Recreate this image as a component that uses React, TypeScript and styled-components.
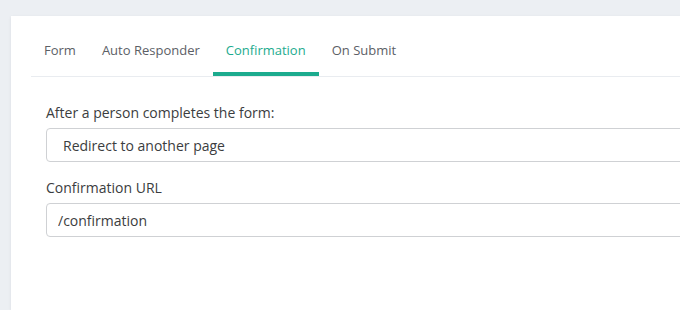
import styled, { createGlobalStyle } from 'styled-components';

const GlobalStyle = createGlobalStyle`
    html, body {
        margin: 0;
        padding: 0;
        background: #eceff3;
        overflow: hidden;
        font-family: "Open Sans", "Liberation Sans", sans-serif;
    }
`

const tabs = ['Form', 'Auto Responder', 'Confirmation', 'On Submit'];

interface TabProps {
    active?: boolean;
}

const App = () => {
    return (
        <Page>
            <GlobalStyle/>
            <Card>
                <TabNav>
                    {tabs.map(tab => (
                        <Tab key={tab} active={tab === 'Confirmation'}>{tab}</Tab>
                    ))}
                </TabNav>
                <Body>
                    <Field>
                        <Label>After a person completes the form:</Label>
                        <Select defaultValue="redirect">
                            <option value="message">Show a message</option>
                            <option value="redirect">Redirect to another page</option>
                        </Select>
                    </Field>
                    <Field>
                        <Label>Confirmation URL</Label>
                        <Input defaultValue="/confirmation"/>
                    </Field>
                </Body>
            </Card>
        </Page>
    )
}

const Page = styled.div`
    padding: 16px 0 0 11px;
    height: 310px;
    box-sizing: border-box;
`
const Card = styled.div`
    width: 900px;
    height: 294px;
    background: #fff;
    padding: 0 20px;
    box-sizing: border-box;
    box-shadow: 0 1px 3px rgba(20, 30, 50, 0.08);
`
const TabNav = styled.div`
    display: flex;
    border-bottom: 1px solid #e9ecf0;
`
const Tab = styled.div<TabProps>`
    padding: 24px 13px 12px 13px;
    font-size: 13px;
    line-height: 20px;
    color: ${props => props.active ? '#1cab8e' : '#5c6066'};
    border-bottom: 4px solid ${props => props.active ? '#1cab8e' : 'transparent'};
    cursor: pointer;
`
const Body = styled.div`
    padding: 26px 15px 0 15px;
    display: flex;
    flex-direction: column;
    gap: 16px;
`
const Field = styled.div`
    display: flex;
    flex-direction: column;
    gap: 5px;
`
const Label = styled.label`
    font-size: 14px;
    line-height: 20px;
    color: #3b3d40;
`
const Select = styled.select`
    appearance: none;
    height: 34px;
    border: 1px solid #cfd1d4;
    border-radius: 4px;
    padding: 0 16px;
    font-family: inherit;
    font-size: 14px;
    color: #3b3d40;
    background: #fff;
    outline: none;
`
const Input = styled.input`
    height: 34px;
    box-sizing: border-box;
    border: 1px solid #cfd1d4;
    border-radius: 4px;
    padding: 0 11px;
    font-family: inherit;
    font-size: 14px;
    color: #3b3d40;
    background: #fff;
    outline: none;
`

export default App
